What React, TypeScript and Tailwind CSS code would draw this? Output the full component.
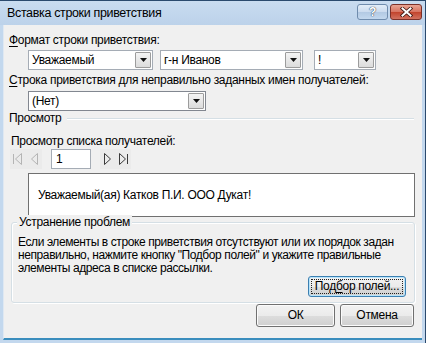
import type { ReactNode } from 'react';

const FONT = "font-['Segoe_UI','Liberation_Sans','Noto_Sans',sans-serif]";

function DropArrow() {
  return (
    <div className="w-[16px] h-[16px] border border-[#9c9c9c] rounded-[1px] bg-gradient-to-b from-[#f4f4f4] to-[#dcdcdc] flex items-center justify-center">
      <svg width="7" height="4" viewBox="0 0 7 4">
        <path d="M0 0h7L3.5 4z" fill="#111" />
      </svg>
    </div>
  );
}

function Combo({ value, width, dark }: { value: string; width: string; dark?: boolean }) {
  return (
    <div
      className={`${width} h-[20px] bg-white border ${dark ? 'border-[#828790]' : 'border-[#a5acb5]'} flex items-center pl-[3px] pr-[1px]`}
    >
      <span className="flex-1 leading-[15px] truncate">{value}</span>
      <DropArrow />
    </div>
  );
}

function NavIcon({ kind, disabled }: { kind: 'first' | 'prev' | 'next' | 'last'; disabled?: boolean }) {
  const c = disabled ? '#b4b4b4' : '#3a3a3a';
  return (
    <svg width="12" height="16" viewBox="0 0 12 16">
      {kind === 'first' && (
        <>
          <path d="M2.5 3v10" stroke={c} fill="none" />
          <path d="M10.5 2.5v11L4.5 8z" stroke={c} fill="none" />
        </>
      )}
      {kind === 'prev' && <path d="M8.5 2.5v11L2.5 8z" stroke={c} fill="none" />}
      {kind === 'next' && <path d="M3.5 2.5v11L9.5 8z" stroke={c} fill="none" />}
      {kind === 'last' && (
        <>
          <path d="M1.5 2.5v11L7.5 8z" stroke={c} fill="none" />
          <path d="M9.5 3v10" stroke={c} fill="none" />
        </>
      )}
    </svg>
  );
}

function Button({ children, width, focused }: { children: ReactNode; width: string; focused?: boolean }) {
  return (
    <div
      className={`${width} h-full rounded-[3px] border ${focused ? 'border-[#3c7fb1] shadow-[inset_0_0_0_1px_#b7e4fb]' : 'border-[#707070] shadow-[inset_0_0_0_1px_#fbfbfb]'} bg-[linear-gradient(#f2f2f2_0%,#ebebeb_50%,#dddddd_51%,#cfcfcf_100%)] flex items-center justify-center p-[2px]`}
    >
      <div
        className={`w-full h-full flex items-center justify-center ${focused ? 'outline-1 outline-dotted outline-[#222] -outline-offset-1' : ''}`}
      >
        <span className="leading-[15px]">{children}</span>
      </div>
    </div>
  );
}

export default function App() {
  return (
    <div className={`${FONT} text-[12px] tracking-[-0.3px] text-black w-[426px] h-[343px] bg-[#c3d8ee] flex flex-col border-t border-r border-[#2b4a6e] overflow-hidden`}>
      {/* Title bar */}
      <div className="h-[24px] flex items-start bg-gradient-to-b from-[#c9dcf0] to-[#bcd2ea] shrink-0">
        <span className="pl-[7px] pt-[4px] text-[12.5px] tracking-[-0.35px] leading-[17px] text-black">Вставка строки приветствия</span>
        <div className="ml-auto flex gap-[2px] pt-[3px] pr-[3px]">
          <div className="w-[31px] h-[16px] rounded-[3px] border border-[#6f8cad] bg-[linear-gradient(#e3edf8_0%,#cadbee_50%,#b2c9e3_51%,#c3d8ee_100%)] flex items-center justify-center">
            <span className="text-white font-bold text-[12px] leading-[12px] [text-shadow:0_0_1px_#2a3a50,0_0_1px_#2a3a50]">?</span>
          </div>
          <div className="w-[32px] h-[16px] rounded-[3px] border border-[#7b3028] bg-[linear-gradient(#e8a493_0%,#d7725f_50%,#c2432c_51%,#d27260_100%)] flex items-center justify-center">
            <svg width="13" height="10" viewBox="0 0 13 10">
              <path d="M2.5 1.5l8 7M10.5 1.5l-8 7" stroke="#3a1510" strokeWidth="3.6" strokeLinecap="square" />
              <path d="M2.5 1.5l8 7M10.5 1.5l-8 7" stroke="#ffffff" strokeWidth="2" strokeLinecap="square" />
            </svg>
          </div>
        </div>
      </div>

      {/* Client area */}
      <div className="flex-1 ml-[3px] mr-[3px] mb-[3px] bg-[#f0f0f0] border-l border-[#dfe8f2] border-b-2 border-b-[#3a8dbd] flex flex-col pl-[4px] pr-[6px]">
        <div className="mt-[8px] leading-[15px] pl-[1px]">
          <u className="underline-offset-2">Ф</u>ормат строки приветствия:
        </div>
        <div className="mt-[2px] ml-[20px] flex">
          <Combo value="Уважаемый" width="w-[125px]" />
          <div className="ml-[7px] w-[143px] h-[20px] bg-white border border-[#a5acb5] flex items-center pl-[3px] pr-[1px]">
            <span className="flex-1 leading-[15px]">г-н Иванов</span>
            <DropArrow />
          </div>
          <div className="ml-[11px]">
            <Combo value="!" width="w-[62px]" />
          </div>
        </div>

        <div className="mt-[3px] leading-[15px] pl-[1px]">
          <u className="underline-offset-2">С</u>трока приветствия для неправильно заданных имен получателей:
        </div>
        <div className="mt-[3px] ml-[20px]">
          <Combo value="(Нет)" width="w-[178px]" dark />
        </div>

        <div className="mt-0 flex items-center pl-[1px]">
          <span className="leading-[15px]">Просмотр</span>
          <div className="flex-1 ml-[6px] mr-[2px] h-[2px] border-t border-[#d5dfe5] border-b border-b-white" />
        </div>

        <div className="mt-[8px] leading-[15px] pl-[3px]">Просмотр списка получателей:</div>
        <div className="mt-0 flex items-center h-[20px] pl-[2px]">
          <div className="flex items-center gap-[6px] h-[20px] px-[1px] bg-[#ebebeb]">
            <NavIcon kind="first" disabled />
            <NavIcon kind="prev" disabled />
          </div>
          <div className="ml-[9px] w-[40px] h-[20px] bg-white border border-[#a5acb5] flex items-center pl-[4px]">
            <span className="leading-[15px]">1</span>
          </div>
          <div className="ml-[9px] flex items-center gap-[5px] h-[20px] px-[1px] bg-[#ebebeb]">
            <NavIcon kind="next" />
            <NavIcon kind="last" />
          </div>
        </div>

        <div className="mt-[4px] ml-[20px] mr-[1px] h-[44px] bg-white border border-[#707070] flex items-center pl-[9px]">
          <span className="leading-[15px]">Уважаемый(ая) Катков П.И. ООО Дукат!</span>
        </div>

        {/* Troubleshooting group */}
        <div className="relative mt-[5px] ml-[3px] mr-[1px] h-[81px] rounded-[3px] border border-[#d5dfe5] shadow-[inset_1px_1px_0_#ffffff,1px_1px_0_#ffffff] flex flex-col pl-[6px] pr-[8px]">
          <span className="absolute -top-[8px] left-[5px] px-[2px] bg-[#f0f0f0] leading-[15px]">Устранение проблем</span>
          <div className="mt-[13px] leading-[13px] w-[395px] tracking-[-0.4px]">
            Если элементы в строке приветствия отсутствуют или их порядок задан неправильно, нажмите кнопку "Подбор полей" и укажите правильные элементы адреса в списке рассылки.
          </div>
          <div className="mt-auto mb-[5px] h-[21px] flex justify-end">
            <Button width="w-[98px]" focused>
              Под<u className="underline-offset-2">б</u>ор полей...
            </Button>
          </div>
        </div>

        <div className="mt-[1px] h-[23px] flex justify-end gap-[5px] pr-[2px]">
          <Button width="w-[79px]">ОК</Button>
          <Button width="w-[74px]">Отмена</Button>
        </div>
      </div>
    </div>
  );
}
